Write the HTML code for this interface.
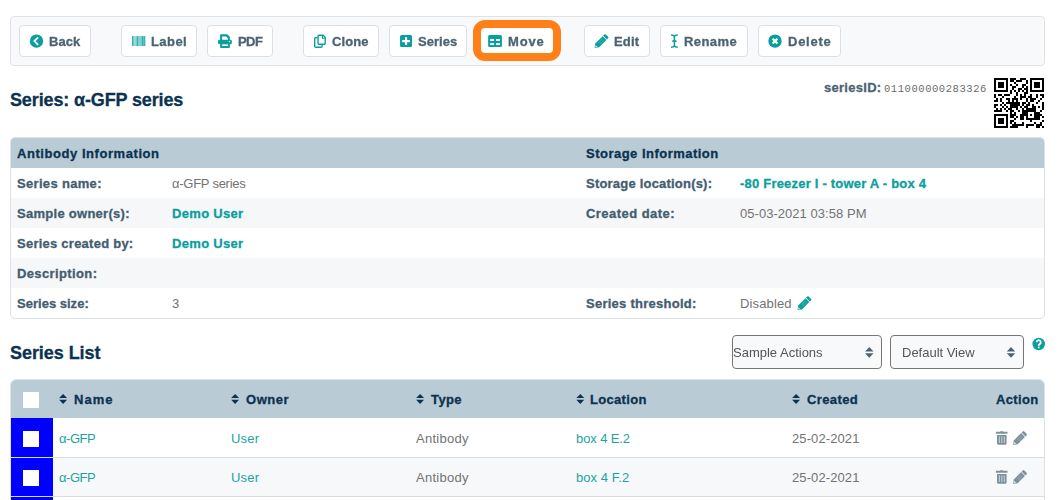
<!DOCTYPE html>
<html><head><meta charset="utf-8"><title>Series</title>
<style>
html,body{margin:0;padding:0;background:#fff;}
body{width:1060px;height:500px;position:relative;overflow:hidden;font-family:"Liberation Sans",sans-serif;}
.t{position:absolute;white-space:pre;display:block;}
.g{will-change:transform;}
.i{position:absolute;display:block;overflow:visible;}
.b{position:absolute;box-sizing:border-box;}
.btn{position:absolute;box-sizing:border-box;top:25px;height:32px;background:#fff;border:1px solid #dde1e5;border-radius:4px;}
</style></head><body>

<div class="b" style="left:10px;top:16px;width:1035px;height:50px;background:#f7f9fa;border:1px solid #dfe3e6;border-radius:4px;"></div>
<div class="btn" style="left:19px;width:72px;"></div>
<svg class="i" style="left:29px;top:34px" width="16" height="15" viewBox="0 0 16 15"><g transform="translate(0.8 0.4)"><circle cx="6.7" cy="6.7" r="6.7" fill="#0a9e9e"/><path d="M8.3 3.0 L4.55 6.7 L8.3 10.4" fill="none" stroke="#fff" stroke-width="1.8" stroke-linejoin="miter"/></g></svg>
<span class="t g" style="left:49.00px;top:26px;height:32px;line-height:32px;font-weight:700;font-size:13px;letter-spacing:0.080px;color:#4b6373;font-family:'Liberation Sans',sans-serif;-webkit-text-stroke:0.3px;">Back</span>
<div class="btn" style="left:121px;width:76px;"></div>
<svg class="i" style="left:132px;top:36px" width="15" height="12" viewBox="0 0 15 12"><g transform="translate(0 0.1)"><rect x="0" y="0" width="1.02" height="10" fill="#0a9e9e" opacity="0.8"/><rect x="1" y="0" width="1.02" height="10" fill="#0a9e9e" opacity="0.55"/><rect x="2" y="0" width="1.02" height="10" fill="#0a9e9e" opacity="0.4"/><rect x="3" y="0" width="1.02" height="10" fill="#0a9e9e" opacity="0.4"/><rect x="4" y="0" width="1.02" height="10" fill="#0a9e9e" opacity="0.55"/><rect x="5" y="0" width="1.02" height="10" fill="#0a9e9e" opacity="0.82"/><rect x="6" y="0" width="1.02" height="10" fill="#0a9e9e" opacity="0.5"/><rect x="7" y="0" width="1.02" height="10" fill="#0a9e9e" opacity="0.48"/><rect x="8" y="0" width="1.02" height="10" fill="#0a9e9e" opacity="0.5"/><rect x="9" y="0" width="1.02" height="10" fill="#0a9e9e" opacity="0.55"/><rect x="10" y="0" width="1.02" height="10" fill="#0a9e9e" opacity="0.82"/><rect x="11" y="0" width="1.02" height="10" fill="#0a9e9e" opacity="0.66"/><rect x="12" y="0" width="1.02" height="10" fill="#0a9e9e" opacity="0.78"/><rect x="13" y="0" width="1.02" height="10" fill="#0a9e9e" opacity="0.28"/></g></svg>
<span class="t g" style="left:151.00px;top:26px;height:32px;line-height:32px;font-weight:700;font-size:13px;letter-spacing:0.425px;color:#4b6373;font-family:'Liberation Sans',sans-serif;-webkit-text-stroke:0.3px;">Label</span>
<div class="btn" style="left:207px;width:66px;"></div>
<svg class="i" style="left:218px;top:34px" width="15" height="15" viewBox="0 0 15 15"><g transform="translate(0.1 0.25)"><path d="M2 6 V0.9 a0.9 0.9 0 0 1 0.9 -0.9 H9.1 L11.75 2.6 V6z" fill="#0a9e9e"/><path d="M4.05 5.8 V2.3 H8.0 L9.8 4.0 V5.8z" fill="#fff"/><rect x="0" y="5.55" width="13.7" height="4.55" rx="1.4" fill="#0a9e9e"/><rect x="2" y="9.3" width="9.75" height="4.35" rx="0.7" fill="#0a9e9e"/><rect x="4.05" y="10.1" width="5.75" height="1.7" fill="#fff"/><circle cx="11.35" cy="7.3" r="0.75" fill="#fff"/></g></svg>
<span class="t g" style="left:238.00px;top:26px;height:32px;line-height:32px;font-weight:700;font-size:13px;letter-spacing:-0.589px;color:#4b6373;font-family:'Liberation Sans',sans-serif;-webkit-text-stroke:0.3px;">PDF</span>
<div class="btn" style="left:303px;width:76px;"></div>
<svg class="i" style="left:314px;top:34px" width="13" height="15" viewBox="0 0 13 15"><g transform="translate(0.0 0.45)"><path d="M3.35 3.25 H1.8 a1.1 1.1 0 0 0 -1.1 1.1 V11.7 a1.1 1.1 0 0 0 1.1 1.1 H7 a1.1 1.1 0 0 0 1.1 -1.1 V10.6" fill="none" stroke="#0a9e9e" stroke-width="1.4"/><path d="M5.15 0.8 H9.0 L11.2 3.0 V8.7 a1.1 1.1 0 0 1 -1.1 1.1 H5.15 a1.1 1.1 0 0 1 -1.1 -1.1 V1.9 a1.1 1.1 0 0 1 1.1 -1.1z" fill="none" stroke="#0a9e9e" stroke-width="1.4"/><path d="M8.4 0.8 v3.0 h3.0" fill="none" stroke="#0a9e9e" stroke-width="1.2"/></g></svg>
<span class="t g" style="left:332.00px;top:26px;height:32px;line-height:32px;font-weight:700;font-size:13px;letter-spacing:0.095px;color:#4b6373;font-family:'Liberation Sans',sans-serif;-webkit-text-stroke:0.3px;">Clone</span>
<div class="btn" style="left:389px;width:78px;"></div>
<svg class="i" style="left:400px;top:35px" width="14" height="13" viewBox="0 0 14 13"><g transform="translate(0.05 0.0)"><rect x="0" y="0" width="12" height="12" rx="1.6" fill="#0a9e9e"/><path d="M6 2.3v7.6M2.15 6.1h7.7" stroke="#fff" stroke-width="2.1"/></g></svg>
<span class="t g" style="left:418.00px;top:26px;height:32px;line-height:32px;font-weight:700;font-size:13px;letter-spacing:0.026px;color:#4b6373;font-family:'Liberation Sans',sans-serif;-webkit-text-stroke:0.3px;">Series</span>
<div class="btn" style="left:477px;width:77px;"></div>
<svg class="i" style="left:488px;top:35px" width="15" height="13" viewBox="0 0 15 13"><g transform="translate(0.15 0.0)"><rect x="0" y="0" width="13.75" height="12" rx="1.5" fill="#0a9e9e"/><rect x="2.05" y="4.0" width="3.9" height="2" fill="#fff"/><rect x="2.05" y="8.07" width="3.9" height="2" fill="#fff"/><rect x="7.9" y="4.0" width="3.9" height="2" fill="#fff"/><rect x="7.9" y="8.07" width="3.9" height="2" fill="#fff"/></g></svg>
<span class="t g" style="left:508.00px;top:26px;height:32px;line-height:32px;font-weight:700;font-size:13px;letter-spacing:0.845px;color:#4b6373;font-family:'Liberation Sans',sans-serif;-webkit-text-stroke:0.3px;">Move</span>
<div class="btn" style="left:584px;width:66px;"></div>
<svg class="i" style="left:591px;top:31px" width="22" height="22" viewBox="0 0 22 22"><g transform="translate(0.5 0.1)"><g transform="translate(10 10) rotate(45)"><path d="M-2.7 -6.6 a1.1 1.1 0 0 1 1.1 -1.1 h3.2 a1.1 1.1 0 0 1 1.1 1.1 v1.6 h-5.4z" fill="#0a9e9e"/><path d="M-2.7 -4.3 h5.4 v10.4 l-2.7 3.6 l-2.7 -3.6z" fill="#0a9e9e"/><path d="M-1.5 6.9 L0 8.9 L1.5 6.9z" fill="#fff" opacity="0.75"/><path d="M-0.9 -2.5v6 M0.9 -2.5v6" stroke="#fff" stroke-width="0.45" opacity="0.45"/></g></g></svg>
<span class="t g" style="left:614.00px;top:26px;height:32px;line-height:32px;font-weight:700;font-size:13px;letter-spacing:0.134px;color:#4b6373;font-family:'Liberation Sans',sans-serif;-webkit-text-stroke:0.3px;">Edit</span>
<div class="btn" style="left:660px;width:88px;"></div>
<svg class="i" style="left:670px;top:34px" width="10" height="16" viewBox="0 0 10 16"><g transform="translate(0.7 0.15)"><path d="M0.3 0.8 C2 0.8 3.3 1.3 3.7 2.4 C4.1 1.3 5.4 0.8 7.1 0.8 M0.3 13.1 C2 13.1 3.3 12.6 3.7 11.5 C4.1 12.6 5.4 13.1 7.1 13.1 M3.7 2.2 V11.7 M1.6 6.95 H5.8" fill="none" stroke="#0a9e9e" stroke-width="1.55"/></g></svg>
<span class="t g" style="left:684.00px;top:26px;height:32px;line-height:32px;font-weight:700;font-size:13px;letter-spacing:0.437px;color:#4b6373;font-family:'Liberation Sans',sans-serif;-webkit-text-stroke:0.3px;">Rename</span>
<div class="btn" style="left:758px;width:83px;"></div>
<svg class="i" style="left:768px;top:34px" width="15" height="15" viewBox="0 0 15 15"><g transform="translate(0.3 0.4)"><circle cx="6.7" cy="6.7" r="6.7" fill="#0a9e9e"/><path d="M4.35 4.35 L9.05 9.05 M9.05 4.35 L4.35 9.05" stroke="#fff" stroke-width="2.25"/></g></svg>
<span class="t g" style="left:788.00px;top:26px;height:32px;line-height:32px;font-weight:700;font-size:13px;letter-spacing:0.747px;color:#4b6373;font-family:'Liberation Sans',sans-serif;-webkit-text-stroke:0.3px;">Delete</span>
<div class="b" style="left:473px;top:20px;width:88px;height:41px;border:8px solid #ff7f18;border-radius:12px;"></div>
<span class="t" style="left:10.00px;top:87px;height:26px;line-height:26px;font-weight:700;font-size:18px;letter-spacing:-0.131px;color:#0b3250;font-family:'Liberation Sans',sans-serif;-webkit-text-stroke:0.3px;">Series: α-GFP series</span>
<span class="t" style="left:824.00px;top:78px;height:20px;line-height:20px;font-weight:700;font-size:13px;letter-spacing:0.285px;color:#4b6373;font-family:'Liberation Sans',sans-serif;-webkit-text-stroke:0.3px;">seriesID:</span>
<span class="t" style="left:884.00px;top:78.6px;height:20px;line-height:20px;font-weight:400;font-size:10.5px;letter-spacing:0.556px;color:#6c6c6c;font-family:'Liberation Mono',monospace;">011000000283326</span>
<svg class="i" style="left:994px;top:78px" width="50" height="50" viewBox="0 0 50 50" shape-rendering="crispEdges"><rect width="50" height="50" fill="#fff"/><path d="M0 0h14v2h-14zM16 0h6v2h-6zM26 0h6v2h-6zM36 0h14v2h-14zM0 2h2v2h-2zM12 2h2v2h-2zM16 2h4v2h-4zM22 2h6v2h-6zM32 2h2v2h-2zM36 2h2v2h-2zM48 2h2v2h-2zM0 4h2v2h-2zM4 4h6v2h-6zM12 4h2v2h-2zM20 4h2v2h-2zM32 4h2v2h-2zM36 4h2v2h-2zM40 4h6v2h-6zM48 4h2v2h-2zM0 6h2v2h-2zM4 6h6v2h-6zM12 6h2v2h-2zM16 6h2v2h-2zM22 6h2v2h-2zM28 6h4v2h-4zM36 6h2v2h-2zM40 6h6v2h-6zM48 6h2v2h-2zM0 8h2v2h-2zM4 8h6v2h-6zM12 8h2v2h-2zM18 8h4v2h-4zM28 8h2v2h-2zM32 8h2v2h-2zM36 8h2v2h-2zM40 8h6v2h-6zM48 8h2v2h-2zM0 10h2v2h-2zM12 10h2v2h-2zM18 10h2v2h-2zM24 10h4v2h-4zM30 10h4v2h-4zM36 10h2v2h-2zM48 10h2v2h-2zM0 12h14v2h-14zM16 12h2v2h-2zM20 12h2v2h-2zM24 12h2v2h-2zM28 12h2v2h-2zM32 12h2v2h-2zM36 12h14v2h-14zM16 14h2v2h-2zM22 14h2v2h-2zM30 14h4v2h-4zM0 16h2v2h-2zM4 16h4v2h-4zM10 16h6v2h-6zM22 16h2v2h-2zM26 16h2v2h-2zM30 16h2v2h-2zM36 16h2v2h-2zM42 16h2v2h-2zM46 16h4v2h-4zM0 18h2v2h-2zM8 18h2v2h-2zM20 18h2v2h-2zM26 18h6v2h-6zM34 18h4v2h-4zM42 18h2v2h-2zM48 18h2v2h-2zM2 20h2v2h-2zM6 20h2v2h-2zM12 20h4v2h-4zM18 20h6v2h-6zM26 20h2v2h-2zM32 20h2v2h-2zM36 20h6v2h-6zM46 20h2v2h-2zM0 22h4v2h-4zM6 22h2v2h-2zM14 22h2v2h-2zM18 22h2v2h-2zM22 22h2v2h-2zM32 22h2v2h-2zM36 22h4v2h-4zM44 22h2v2h-2zM8 24h2v2h-2zM12 24h14v2h-14zM28 24h4v2h-4zM34 24h2v2h-2zM42 24h2v2h-2zM48 24h2v2h-2zM0 26h4v2h-4zM6 26h2v2h-2zM10 26h2v2h-2zM16 26h10v2h-10zM28 26h2v2h-2zM32 26h4v2h-4zM38 26h2v2h-2zM48 26h2v2h-2zM0 28h2v2h-2zM8 28h2v2h-2zM12 28h2v2h-2zM16 28h8v2h-8zM26 28h2v2h-2zM30 28h4v2h-4zM38 28h4v2h-4zM44 28h2v2h-2zM48 28h2v2h-2zM2 30h2v2h-2zM6 30h2v2h-2zM10 30h2v2h-2zM14 30h4v2h-4zM22 30h2v2h-2zM28 30h2v2h-2zM32 30h10v2h-10zM48 30h2v2h-2zM0 32h8v2h-8zM12 32h2v2h-2zM16 32h4v2h-4zM24 32h2v2h-2zM28 32h14v2h-14zM46 32h2v2h-2zM16 34h2v2h-2zM20 34h2v2h-2zM28 34h6v2h-6zM40 34h6v2h-6zM0 36h14v2h-14zM16 36h6v2h-6zM26 36h8v2h-8zM36 36h2v2h-2zM40 36h8v2h-8zM0 38h2v2h-2zM12 38h2v2h-2zM16 38h4v2h-4zM22 38h2v2h-2zM26 38h4v2h-4zM32 38h2v2h-2zM40 38h6v2h-6zM48 38h2v2h-2zM0 40h2v2h-2zM4 40h6v2h-6zM12 40h2v2h-2zM20 40h2v2h-2zM26 40h4v2h-4zM32 40h14v2h-14zM0 42h2v2h-2zM4 42h6v2h-6zM12 42h2v2h-2zM16 42h4v2h-4zM36 42h2v2h-2zM48 42h2v2h-2zM0 44h2v2h-2zM4 44h6v2h-6zM12 44h2v2h-2zM16 44h2v2h-2zM20 44h2v2h-2zM28 44h2v2h-2zM40 44h2v2h-2zM46 44h2v2h-2zM0 46h2v2h-2zM12 46h2v2h-2zM18 46h12v2h-12zM32 46h8v2h-8zM42 46h6v2h-6zM0 48h14v2h-14zM16 48h8v2h-8zM32 48h2v2h-2zM42 48h4v2h-4zM48 48h2v2h-2z" fill="#000"/></svg>
<div class="b" style="left:10px;top:137px;width:1035px;height:182px;border:1px solid #dfe3e6;border-radius:5px;overflow:hidden;background:#fff;"><div style="position:absolute;left:0;top:0;width:100%;height:30px;background:#b9cbd4"></div><div style="position:absolute;left:0;top:60px;width:100%;height:30px;background:#f6f7f8"></div><div style="position:absolute;left:0;top:120px;width:100%;height:30px;background:#f6f7f8"></div></div>
<span class="t" style="left:17.00px;top:139px;height:30px;line-height:30px;font-weight:700;font-size:13px;letter-spacing:0.557px;color:#0b3250;font-family:'Liberation Sans',sans-serif;-webkit-text-stroke:0.3px;">Antibody Information</span>
<span class="t" style="left:586.00px;top:139px;height:30px;line-height:30px;font-weight:700;font-size:13px;letter-spacing:0.485px;color:#0b3250;font-family:'Liberation Sans',sans-serif;-webkit-text-stroke:0.3px;">Storage Information</span>
<span class="t" style="left:17.00px;top:169px;height:30px;line-height:30px;font-weight:700;font-size:13px;letter-spacing:0.322px;color:#435d70;font-family:'Liberation Sans',sans-serif;-webkit-text-stroke:0.3px;">Series name:</span>
<span class="t" style="left:17.00px;top:199px;height:30px;line-height:30px;font-weight:700;font-size:13px;letter-spacing:0.276px;color:#435d70;font-family:'Liberation Sans',sans-serif;-webkit-text-stroke:0.3px;">Sample owner(s):</span>
<span class="t" style="left:17.00px;top:229px;height:30px;line-height:30px;font-weight:700;font-size:13px;letter-spacing:0.246px;color:#435d70;font-family:'Liberation Sans',sans-serif;-webkit-text-stroke:0.3px;">Series created by:</span>
<span class="t" style="left:17.00px;top:259px;height:30px;line-height:30px;font-weight:700;font-size:13px;letter-spacing:0.378px;color:#435d70;font-family:'Liberation Sans',sans-serif;-webkit-text-stroke:0.3px;">Description:</span>
<span class="t" style="left:17.00px;top:289px;height:30px;line-height:30px;font-weight:700;font-size:13px;letter-spacing:0.015px;color:#435d70;font-family:'Liberation Sans',sans-serif;-webkit-text-stroke:0.3px;">Series size:</span>
<span class="t" style="left:172.00px;top:169px;height:30px;line-height:30px;font-weight:400;font-size:13px;letter-spacing:-0.260px;color:#737373;font-family:'Liberation Sans',sans-serif;">α-GFP series</span>
<span class="t" style="left:172.00px;top:199px;height:30px;line-height:30px;font-weight:700;font-size:13px;letter-spacing:0.318px;color:#0a9e9e;font-family:'Liberation Sans',sans-serif;-webkit-text-stroke:0.3px;">Demo User</span>
<span class="t" style="left:172.00px;top:229px;height:30px;line-height:30px;font-weight:700;font-size:13px;letter-spacing:0.318px;color:#0a9e9e;font-family:'Liberation Sans',sans-serif;-webkit-text-stroke:0.3px;">Demo User</span>
<span class="t" style="left:172.00px;top:289px;height:30px;line-height:30px;font-weight:400;font-size:13px;letter-spacing:0.799px;color:#737373;font-family:'Liberation Sans',sans-serif;">3</span>
<span class="t" style="left:586.00px;top:169px;height:30px;line-height:30px;font-weight:700;font-size:13px;letter-spacing:0.206px;color:#435d70;font-family:'Liberation Sans',sans-serif;-webkit-text-stroke:0.3px;">Storage location(s):</span>
<span class="t" style="left:586.00px;top:199px;height:30px;line-height:30px;font-weight:700;font-size:13px;letter-spacing:0.460px;color:#435d70;font-family:'Liberation Sans',sans-serif;-webkit-text-stroke:0.3px;">Created date:</span>
<span class="t" style="left:586.00px;top:289px;height:30px;line-height:30px;font-weight:700;font-size:13px;letter-spacing:0.260px;color:#435d70;font-family:'Liberation Sans',sans-serif;-webkit-text-stroke:0.3px;">Series threshold:</span>
<span class="t" style="left:740.00px;top:169px;height:30px;line-height:30px;font-weight:700;font-size:13px;letter-spacing:0.211px;color:#0a9e9e;font-family:'Liberation Sans',sans-serif;-webkit-text-stroke:0.3px;">-80 Freezer I - tower A - box 4</span>
<span class="t" style="left:740.00px;top:199px;height:30px;line-height:30px;font-weight:400;font-size:13px;letter-spacing:0.039px;color:#737373;font-family:'Liberation Sans',sans-serif;">05-03-2021 03:58 PM</span>
<span class="t" style="left:740.00px;top:289px;height:30px;line-height:30px;font-weight:400;font-size:13px;letter-spacing:0.140px;color:#737373;font-family:'Liberation Sans',sans-serif;">Disabled</span>
<svg class="i" style="left:794px;top:293px" width="22" height="22" viewBox="0 0 22 22"><g transform="translate(0.4 0.2)"><g transform="translate(10 10) rotate(45)"><path d="M-2.7 -6.6 a1.1 1.1 0 0 1 1.1 -1.1 h3.2 a1.1 1.1 0 0 1 1.1 1.1 v1.6 h-5.4z" fill="#0a9e9e"/><path d="M-2.7 -4.3 h5.4 v10.4 l-2.7 3.6 l-2.7 -3.6z" fill="#0a9e9e"/><path d="M-1.5 6.9 L0 8.9 L1.5 6.9z" fill="#fff" opacity="0.75"/><path d="M-0.9 -2.5v6 M0.9 -2.5v6" stroke="#fff" stroke-width="0.45" opacity="0.45"/></g></g></svg>
<span class="t" style="left:10.00px;top:340px;height:26px;line-height:26px;font-weight:700;font-size:18px;letter-spacing:-0.059px;color:#0b3250;font-family:'Liberation Sans',sans-serif;-webkit-text-stroke:0.3px;">Series List</span>
<div class="b" style="left:732px;top:335px;width:150px;height:34px;border:1px solid #767676;border-radius:4px;background:#f8f9fa"></div>
<div class="b" style="left:890px;top:335px;width:134px;height:34px;border:1px solid #767676;border-radius:4px;background:#f8f9fa"></div>
<span class="t g" style="left:733.00px;top:336px;height:34px;line-height:34px;font-weight:400;font-size:13px;letter-spacing:-0.001px;color:#555;font-family:'Liberation Sans',sans-serif;">Sample Actions</span>
<span class="t g" style="left:902.00px;top:336px;height:34px;line-height:34px;font-weight:400;font-size:13px;letter-spacing:-0.013px;color:#555;font-family:'Liberation Sans',sans-serif;">Default View</span>
<svg class="i" style="left:865px;top:347px" width="10" height="12" viewBox="0 0 10 12"><g transform="translate(0.1 0)"><path d="M0 4.6 L4.2 0 L8.4 4.6z M0 6.2 L4.2 10.8 L8.4 6.2z" fill="#4b6373"/></g></svg>
<svg class="i" style="left:1006px;top:347px" width="11" height="12" viewBox="0 0 11 12"><g transform="translate(0.8 0)"><path d="M0 4.6 L4.2 0 L8.4 4.6z M0 6.2 L4.2 10.8 L8.4 6.2z" fill="#4b6373"/></g></svg>
<svg class="i" style="left:1031px;top:337px" width="16" height="15" viewBox="0 0 16 15"><g transform="translate(0.7 0.0)"><g transform="translate(7 7)"><circle cx="0" cy="0" r="6.25" fill="#0a9e9e"/><path d="M-2.05 -1.7 a2.05 2.05 0 1 1 3.2 1.7 c-0.85 0.55 -1.15 0.8 -1.15 1.75" fill="none" stroke="#fff" stroke-width="1.75"/><rect x="-0.9" y="2.6" width="1.8" height="1.7" fill="#fff"/></g></g></svg>
<div class="b" style="left:10px;top:379px;width:1035px;height:140px;border:1px solid #dfe3e6;border-radius:6px 6px 0 0;overflow:hidden;background:#fff;"><div style="position:absolute;left:0;top:0;width:100%;height:38px;background:#b9cbd4"></div><div style="position:absolute;left:0;top:77px;width:100%;height:1px;background:#d9dde0"></div><div style="position:absolute;left:0;top:78px;width:100%;height:38px;background:#f7f8f9"></div><div style="position:absolute;left:0;top:116px;width:100%;height:1px;background:#d9dde0"></div><div style="position:absolute;left:0;top:38px;width:42px;height:39px;background:#0000ff"></div><div style="position:absolute;left:0;top:78px;width:42px;height:38px;background:#0000ff"></div><div style="position:absolute;left:0;top:117px;width:42px;height:30px;background:#0000ff"></div></div>
<div class="b" style="left:23px;top:392px;width:16px;height:16px;background:#fff;"></div>
<div class="b" style="left:23px;top:430.5px;width:16px;height:16px;background:#fff;"></div>
<div class="b" style="left:23px;top:470px;width:16px;height:16px;background:#fff;"></div>
<svg class="i" style="left:59px;top:393px" width="10" height="12" viewBox="0 0 10 12"><g transform="translate(0.15 0.9)"><path d="M0 4.0 L3.95 0 L7.9 4.0z M0 5.8 L3.95 10.05 L7.9 5.8z" fill="#0b3250"/></g></svg>
<span class="t" style="left:74.00px;top:381px;height:38px;line-height:38px;font-weight:700;font-size:13px;letter-spacing:1.065px;color:#0b3250;font-family:'Liberation Sans',sans-serif;-webkit-text-stroke:0.3px;">Name</span>
<svg class="i" style="left:231px;top:393px" width="10" height="12" viewBox="0 0 10 12"><g transform="translate(0.15 0.9)"><path d="M0 4.0 L3.95 0 L7.9 4.0z M0 5.8 L3.95 10.05 L7.9 5.8z" fill="#0b3250"/></g></svg>
<span class="t" style="left:246.00px;top:381px;height:38px;line-height:38px;font-weight:700;font-size:13px;letter-spacing:0.546px;color:#0b3250;font-family:'Liberation Sans',sans-serif;-webkit-text-stroke:0.3px;">Owner</span>
<svg class="i" style="left:416px;top:393px" width="10" height="12" viewBox="0 0 10 12"><g transform="translate(0.15 0.9)"><path d="M0 4.0 L3.95 0 L7.9 4.0z M0 5.8 L3.95 10.05 L7.9 5.8z" fill="#0b3250"/></g></svg>
<span class="t" style="left:431.00px;top:381px;height:38px;line-height:38px;font-weight:700;font-size:13px;letter-spacing:0.402px;color:#0b3250;font-family:'Liberation Sans',sans-serif;-webkit-text-stroke:0.3px;">Type</span>
<svg class="i" style="left:576px;top:393px" width="10" height="12" viewBox="0 0 10 12"><g transform="translate(0.35 0.9)"><path d="M0 4.0 L3.95 0 L7.9 4.0z M0 5.8 L3.95 10.05 L7.9 5.8z" fill="#0b3250"/></g></svg>
<span class="t" style="left:590.00px;top:381px;height:38px;line-height:38px;font-weight:700;font-size:13px;letter-spacing:0.320px;color:#0b3250;font-family:'Liberation Sans',sans-serif;-webkit-text-stroke:0.3px;">Location</span>
<svg class="i" style="left:792px;top:393px" width="10" height="12" viewBox="0 0 10 12"><g transform="translate(0.15 0.9)"><path d="M0 4.0 L3.95 0 L7.9 4.0z M0 5.8 L3.95 10.05 L7.9 5.8z" fill="#0b3250"/></g></svg>
<span class="t" style="left:807.00px;top:381px;height:38px;line-height:38px;font-weight:700;font-size:13px;letter-spacing:0.383px;color:#0b3250;font-family:'Liberation Sans',sans-serif;-webkit-text-stroke:0.3px;">Created</span>
<span class="t" style="left:996.00px;top:381px;height:38px;line-height:38px;font-weight:700;font-size:13px;letter-spacing:0.374px;color:#0b3250;font-family:'Liberation Sans',sans-serif;-webkit-text-stroke:0.3px;">Action</span>
<span class="t" style="left:59.00px;top:419px;height:40px;line-height:40px;font-weight:400;font-size:13px;letter-spacing:-0.476px;color:#1da3a3;font-family:'Liberation Sans',sans-serif;">α-GFP</span>
<span class="t" style="left:231.00px;top:419px;height:40px;line-height:40px;font-weight:400;font-size:13px;letter-spacing:0.187px;color:#1da3a3;font-family:'Liberation Sans',sans-serif;">User</span>
<span class="t" style="left:416.00px;top:419px;height:40px;line-height:40px;font-weight:400;font-size:13px;letter-spacing:0.276px;color:#737373;font-family:'Liberation Sans',sans-serif;">Antibody</span>
<span class="t" style="left:576.00px;top:419px;height:40px;line-height:40px;font-weight:400;font-size:13px;letter-spacing:-0.104px;color:#1da3a3;font-family:'Liberation Sans',sans-serif;">box 4 E.2</span>
<span class="t" style="left:792.00px;top:419px;height:40px;line-height:40px;font-weight:400;font-size:13px;letter-spacing:0.100px;color:#737373;font-family:'Liberation Sans',sans-serif;">25-02-2021</span>
<svg class="i" style="left:995px;top:431px" width="14" height="15" viewBox="0 0 14 15"><g transform="translate(0.9 0.2)"><path d="M0 0.65 h3.9 l0.6 -0.65 h2.6 l0.6 0.65 h3.9 v2.0 h-11.6z" fill="#7d919d"/><path d="M1.1 3.9 h9.6 v8.5 a1.1 1.1 0 0 1 -1.1 1.1 h-7.4 a1.1 1.1 0 0 1 -1.1 -1.1z" fill="#7d919d"/><path d="M3.45 5.2v6.6 M5.9 5.2v6.6 M8.35 5.2v6.6" stroke="#fff" stroke-width="0.8" opacity="0.75"/></g></svg>
<svg class="i" style="left:1010px;top:428px" width="21" height="22" viewBox="0 0 21 22"><g transform="translate(0.0 0.05)"><g transform="translate(10 10) rotate(45)"><path d="M-2.7 -6.6 a1.1 1.1 0 0 1 1.1 -1.1 h3.2 a1.1 1.1 0 0 1 1.1 1.1 v1.6 h-5.4z" fill="#7d919d"/><path d="M-2.7 -4.3 h5.4 v10.4 l-2.7 3.6 l-2.7 -3.6z" fill="#7d919d"/><path d="M-1.5 6.9 L0 8.9 L1.5 6.9z" fill="#fff" opacity="0.75"/><path d="M-0.9 -2.5v6 M0.9 -2.5v6" stroke="#fff" stroke-width="0.45" opacity="0.45"/></g></g></svg>
<span class="t" style="left:59.00px;top:458px;height:40px;line-height:40px;font-weight:400;font-size:13px;letter-spacing:-0.476px;color:#1da3a3;font-family:'Liberation Sans',sans-serif;">α-GFP</span>
<span class="t" style="left:231.00px;top:458px;height:40px;line-height:40px;font-weight:400;font-size:13px;letter-spacing:0.187px;color:#1da3a3;font-family:'Liberation Sans',sans-serif;">User</span>
<span class="t" style="left:416.00px;top:458px;height:40px;line-height:40px;font-weight:400;font-size:13px;letter-spacing:0.276px;color:#737373;font-family:'Liberation Sans',sans-serif;">Antibody</span>
<span class="t" style="left:576.00px;top:458px;height:40px;line-height:40px;font-weight:400;font-size:13px;letter-spacing:0.048px;color:#1da3a3;font-family:'Liberation Sans',sans-serif;">box 4 F.2</span>
<span class="t" style="left:792.00px;top:458px;height:40px;line-height:40px;font-weight:400;font-size:13px;letter-spacing:0.100px;color:#737373;font-family:'Liberation Sans',sans-serif;">25-02-2021</span>
<svg class="i" style="left:995px;top:470px" width="14" height="15" viewBox="0 0 14 15"><g transform="translate(0.9 0.2)"><path d="M0 0.65 h3.9 l0.6 -0.65 h2.6 l0.6 0.65 h3.9 v2.0 h-11.6z" fill="#7d919d"/><path d="M1.1 3.9 h9.6 v8.5 a1.1 1.1 0 0 1 -1.1 1.1 h-7.4 a1.1 1.1 0 0 1 -1.1 -1.1z" fill="#7d919d"/><path d="M3.45 5.2v6.6 M5.9 5.2v6.6 M8.35 5.2v6.6" stroke="#fff" stroke-width="0.8" opacity="0.75"/></g></svg>
<svg class="i" style="left:1010px;top:467px" width="21" height="22" viewBox="0 0 21 22"><g transform="translate(0.0 0.05)"><g transform="translate(10 10) rotate(45)"><path d="M-2.7 -6.6 a1.1 1.1 0 0 1 1.1 -1.1 h3.2 a1.1 1.1 0 0 1 1.1 1.1 v1.6 h-5.4z" fill="#7d919d"/><path d="M-2.7 -4.3 h5.4 v10.4 l-2.7 3.6 l-2.7 -3.6z" fill="#7d919d"/><path d="M-1.5 6.9 L0 8.9 L1.5 6.9z" fill="#fff" opacity="0.75"/><path d="M-0.9 -2.5v6 M0.9 -2.5v6" stroke="#fff" stroke-width="0.45" opacity="0.45"/></g></g></svg>
</body></html>
